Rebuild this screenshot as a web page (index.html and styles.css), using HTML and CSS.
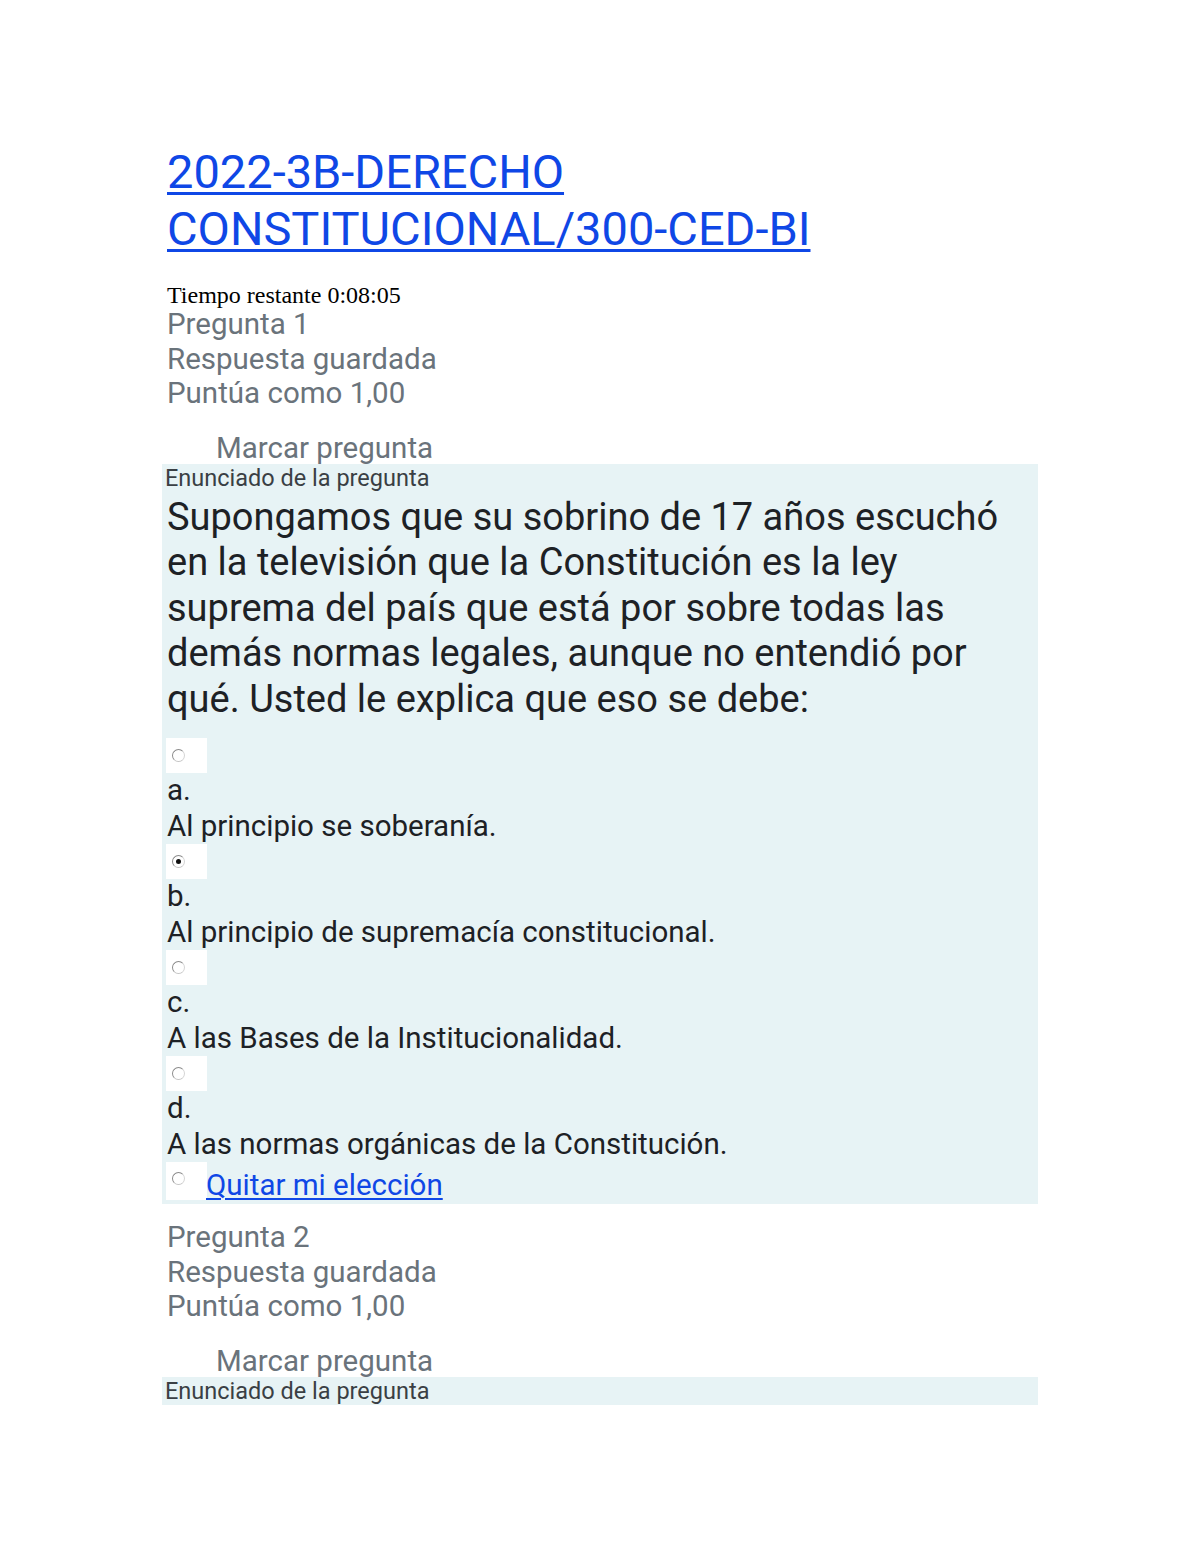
FILE: index.html
```html
<!DOCTYPE html>
<html lang="es">
<head>
    <meta charset="UTF-8">
    <title>2022-3B-DERECHO CONSTITUCIONAL/300-CED-BI</title>
    <link rel="stylesheet" href="styles.css">
</head>
<body>
    <div class="page">
        <h1 class="course-title"><a href="#">2022-3B-DERECHO CONSTITUCIONAL/300-CED-BI</a></h1>

        <div class="timer">Tiempo restante 0:08:05</div>

        <div class="question-info">
            <div class="info-line">Pregunta 1</div>
            <div class="info-line">Respuesta guardada</div>
            <div class="info-line">Puntúa como 1,00</div>
            <div class="flag-line">Marcar pregunta</div>
        </div>

        <div class="question-box">
            <div class="statement-label">Enunciado de la pregunta</div>
            <div class="question-text">Supongamos que su sobrino de 17 años escuchó en la televisión que la Constitución es la ley suprema del país que está por sobre todas las demás normas legales, aunque no entendió por qué. Usted le explica que eso se debe:</div>

            <div class="answer">
                <div class="radio-cell"><span class="radio"></span></div>
                <div class="answer-letter">a.</div>
                <div class="answer-text">Al principio se soberanía.</div>
            </div>
            <div class="answer">
                <div class="radio-cell"><span class="radio checked"></span></div>
                <div class="answer-letter">b.</div>
                <div class="answer-text">Al principio de supremacía constitucional.</div>
            </div>
            <div class="answer">
                <div class="radio-cell"><span class="radio"></span></div>
                <div class="answer-letter">c.</div>
                <div class="answer-text">A las Bases de la Institucionalidad.</div>
            </div>
            <div class="answer">
                <div class="radio-cell"><span class="radio"></span></div>
                <div class="answer-letter">d.</div>
                <div class="answer-text">A las normas orgánicas de la Constitución.</div>
            </div>

            <div class="clear-row">
                <div class="radio-cell tall"><span class="radio"></span></div>
                <a href="#" class="clear-link">Quitar mi elección</a>
            </div>
        </div>

        <div class="question-info second">
            <div class="info-line">Pregunta 2</div>
            <div class="info-line">Respuesta guardada</div>
            <div class="info-line">Puntúa como 1,00</div>
            <div class="flag-line">Marcar pregunta</div>
        </div>

        <div class="question-box short">
            <div class="statement-label">Enunciado de la pregunta</div>
        </div>
    </div>
</body>
</html>
```

FILE: styles.css
```css
body {
    margin: 0;
    padding: 0;
    background-color: #fff;
    font-family: Roboto, "Liberation Sans", sans-serif;
    color: #1d2125;
}
.page {
    width: 876px;
    margin-left: 162px;
    padding-top: 143px;
}
.course-title {
    margin: 0;
    padding-left: 5px;
    font-size: 47px;
    font-weight: 400;
    line-height: 57px;
}
.course-title a {
    color: #0f47e6;
    text-decoration: underline;
    text-decoration-thickness: 3px;
    text-underline-offset: 4px;
}
.timer {
    margin-top: 26px;
    padding-left: 5px;
    font-family: "Liberation Serif", serif;
    font-size: 24px;
    line-height: 24px;
    color: #000;
}
.question-info {
    padding-left: 5px;
    color: #6a737b;
}
.question-info.second {
    margin-top: 16px;
}
.info-line {
    font-size: 29.5px;
    line-height: 34.5px;
}
.flag-line {
    margin-top: 22px;
    padding-left: 49px;
    font-size: 29.5px;
    line-height: 31px;
}
.question-box {
    background-color: #e7f3f5;
    padding: 0;
}
.statement-label {
    padding-left: 3px;
    font-size: 23.5px;
    line-height: 28px;
    color: #3a3f44;
}
.question-text {
    margin-top: 3px;
    padding: 0 20px 16px 5px;
    font-size: 38px;
    line-height: 45.5px;
    color: #1d2125;
}
.answer {
    padding-left: 4px;
}
.radio-cell {
    width: 41px;
    height: 35px;
    background-color: #fff;
    display: flex;
    align-items: center;
    padding-left: 6px;
    box-sizing: border-box;
}
.radio-cell.tall {
    height: 38px;
    align-items: flex-start;
    padding-top: 10px;
}
.radio {
    width: 13px;
    height: 13px;
    border-radius: 50%;
    border: 1.5px solid #8a8a8a;
    border-right-color: #d4d4d4;
    border-bottom-color: #c4c4c4;
    background-color: #fff;
    box-sizing: border-box;
    position: relative;
}
.radio.checked::after {
    content: "";
    position: absolute;
    left: 2.5px;
    top: 2.5px;
    width: 5px;
    height: 5px;
    border-radius: 50%;
    background-color: #111;
}
.answer-letter,
.answer-text {
    padding-left: 1px;
    font-size: 29.5px;
    line-height: 35.5px;
}
.clear-row {
    display: flex;
    align-items: flex-start;
    padding-left: 4px;
}
.clear-link {
    font-size: 29.5px;
    line-height: 38px;
    color: #0f47e6;
    text-decoration: underline;
    text-decoration-thickness: 2px;
    text-underline-offset: 3px;
    margin-top: 4px;
    margin-left: -1px;
}
```
